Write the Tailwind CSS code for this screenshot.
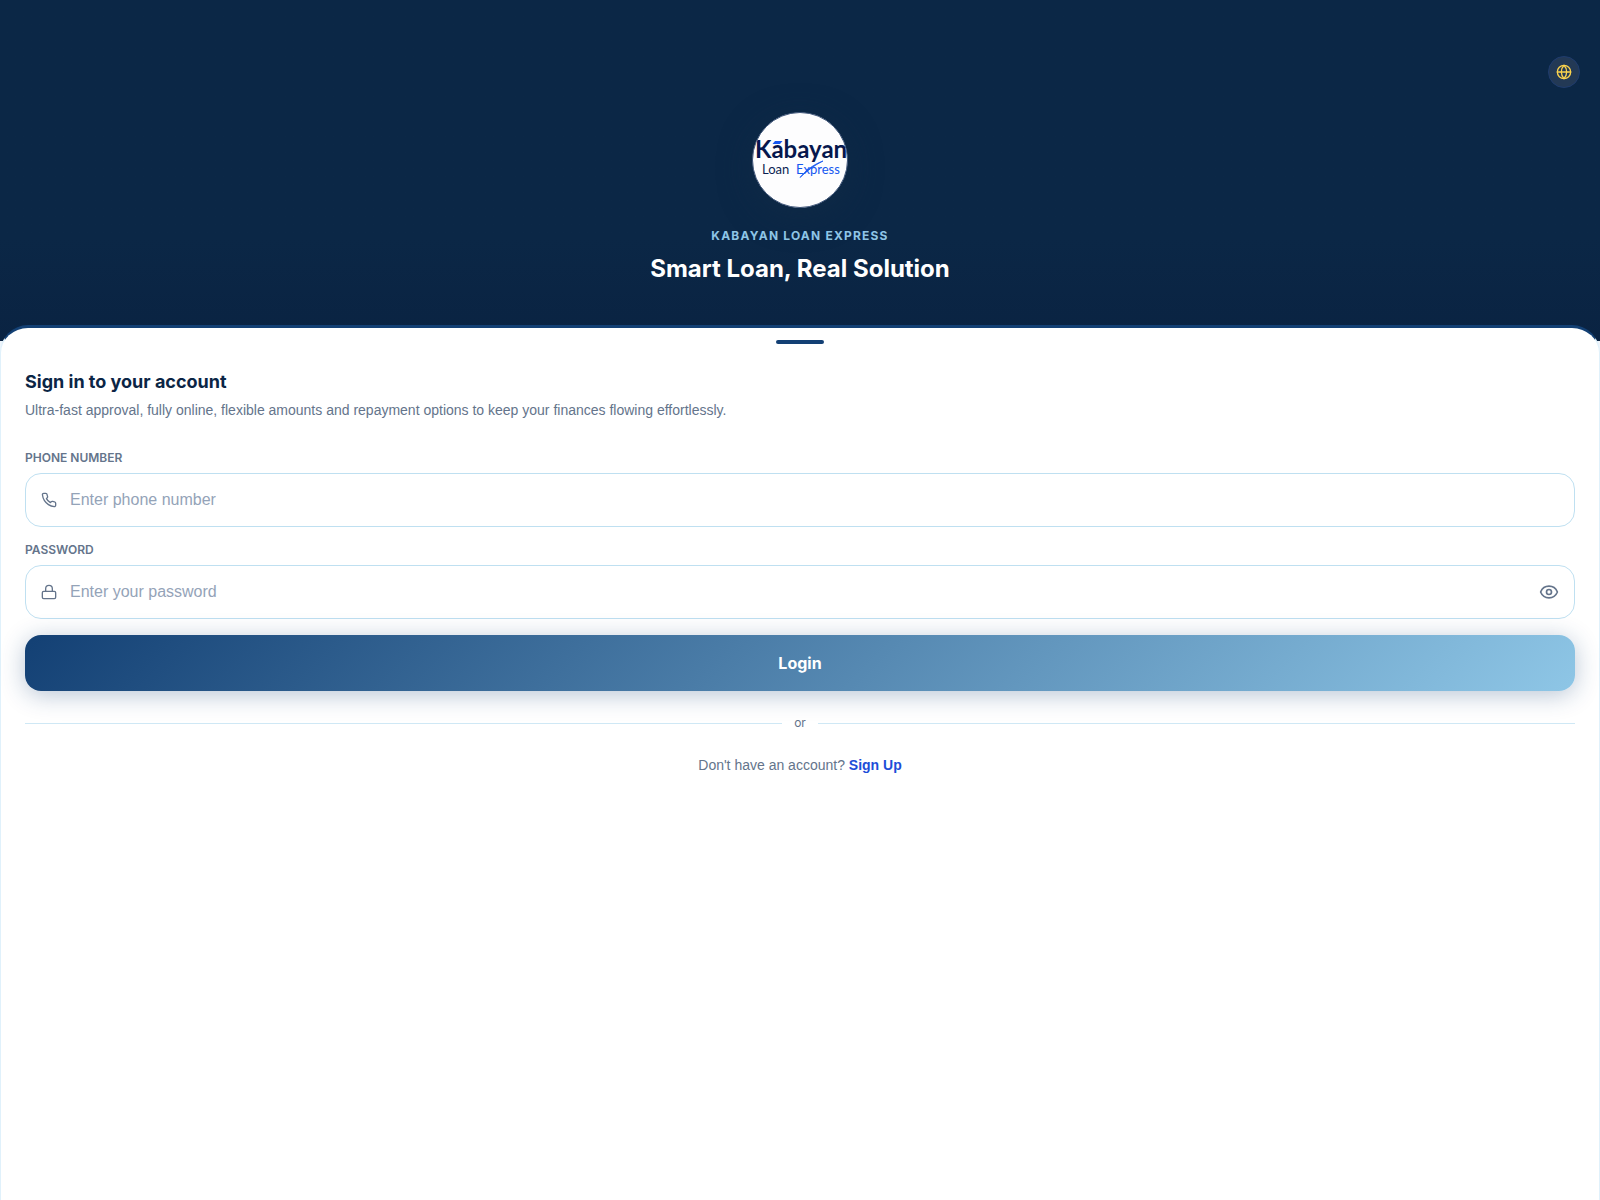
<!DOCTYPE html>
<html lang="en">
<head>
<meta charset="utf-8">
<meta name="viewport" content="width=device-width, initial-scale=1">
<title>Kabayan Loan Express</title>
<script src="https://cdn.jsdelivr.net/npm/@tailwindcss/browser@4"></script>
</head>
<body class="flex min-h-screen flex-col bg-[#eef4fa] font-[Inter,sans-serif]">
<header class="flex flex-col bg-linear-to-b from-[#0b2746] from-70% to-[#0a2342] px-5 pt-14 pb-14">
  <div class="flex justify-end">
    <button type="button" aria-label="Change language" class="flex size-8 items-center justify-center rounded-full border border-[#1f3c6e] bg-[#233955] text-[#fcd34d]">
      <svg class="size-4" viewBox="0 0 24 24" fill="none" stroke="currentColor" stroke-width="2" stroke-linecap="round" stroke-linejoin="round"><circle cx="12" cy="12" r="10"/><path d="M12 2a14.5 14.5 0 0 0 0 20 14.5 14.5 0 0 0 0-20"/><path d="M2 12h20"/></svg>
    </button>
  </div>
  <div class="mt-6 flex flex-col items-center">
    <svg class="size-24 rounded-full border border-[#40567a] bg-[#fdfdfe] shadow-[0_8px_32px_rgba(15,42,70,0.9)]" viewBox="1 1 94 94" role="img" aria-label="Kabayan Loan Express">
      <text x="3" y="46" font-family="Lato, sans-serif" font-weight="700" font-size="24" fill="#06174d">Kabayan</text>
      <path d="M20.500 32l2.500-3h7.500l-2.500 3z" fill="#1557f0"/>
      <text x="10" y="62" font-family="Lato, sans-serif" font-size="13" fill="#0b1f52">Loan</text>
      <text x="44" y="62" font-family="Lato, sans-serif" font-size="13" fill="#1557f0">Express</text>
      <path d="M48 65.500c5-6 12-12.500 23-16.500-9 4.500-16 10-23 16.500z" fill="#1557f0" stroke="#1557f0" stroke-width=".8"/>
    </svg>
    <p class="mt-[19px] text-xs leading-[18px] font-bold tracking-widest text-[#8ec5e6]">KABAYAN LOAN EXPRESS</p>
    <h1 class="mt-2 text-2xl leading-8 font-bold text-white">Smart Loan, Real Solution</h1>
  </div>
</header>
<main class="-mt-4 flex grow flex-col rounded-t-[28px] border-x border-t-3 border-x-[#e0f1fb] border-t-[#134074] bg-white px-6 pt-3 pb-8">
  <div class="h-1 w-12 self-center rounded-full bg-[#134074]"></div>
  <h2 class="mt-6 text-lg leading-7 font-bold text-[#0b2545]">Sign in to your account</h2>
  <p class="mt-1 font-[Liberation_Sans,sans-serif] text-sm leading-[21px] text-[#64748b]">Ultra-fast approval, fully online, flexible amounts and repayment options to keep your finances flowing effortlessly.</p>
  <form class="mt-7 flex flex-col gap-[14px]">
    <div class="flex flex-col gap-1.5">
      <label for="phone" class="text-xs leading-[18px] font-semibold text-[#64748b]">PHONE NUMBER</label>
      <div class="flex h-[54px] items-center gap-[13px] rounded-2xl border border-[#bfe0f1] px-[15px] text-[#64748b]">
        <svg class="size-4 shrink-0" viewBox="0 0 24 24" fill="none" stroke="currentColor" stroke-width="2" stroke-linecap="round" stroke-linejoin="round"><path d="M22 16.920v3a2 2 0 0 1-2.180 2 19.790 19.790 0 0 1-8.630-3.070 19.500 19.500 0 0 1-6-6 19.790 19.790 0 0 1-3.070-8.670A2 2 0 0 1 4.110 2h3a2 2 0 0 1 2 1.720 12.840 12.840 0 0 0 .7 2.810 2 2 0 0 1-.45 2.110L8.090 9.910a16 16 0 0 0 6 6l1.270-1.270a2 2 0 0 1 2.110-.45 12.840 12.840 0 0 0 2.810.7A2 2 0 0 1 22 16.920z"/></svg>
        <input id="phone" type="tel" placeholder="Enter phone number" class="min-w-0 grow bg-transparent font-[Liberation_Sans,sans-serif] text-base text-[#0b2545] outline-none placeholder:text-[#94a3b8]">
      </div>
    </div>
    <div class="flex flex-col gap-1.5">
      <label for="password" class="text-xs leading-[18px] font-semibold text-[#64748b]">PASSWORD</label>
      <div class="flex h-[54px] items-center gap-[13px] rounded-2xl border border-[#bfe0f1] px-[15px] text-[#64748b]">
        <svg class="size-4 shrink-0" viewBox="0 0 24 24" fill="none" stroke="currentColor" stroke-width="2" stroke-linecap="round" stroke-linejoin="round"><rect x="2" y="11" width="20" height="11" rx="2"/><path d="M7 11V7a5 5 0 0 1 10 0v4"/></svg>
        <input id="password" type="password" placeholder="Enter your password" class="min-w-0 grow bg-transparent font-[Liberation_Sans,sans-serif] text-base text-[#0b2545] outline-none placeholder:text-[#94a3b8]">
        <button type="button" aria-label="Show password"><svg class="size-5" viewBox="0 0 24 24" fill="none" stroke="currentColor" stroke-width="2" stroke-linecap="round" stroke-linejoin="round"><path d="M2.060 12.350a1 1 0 0 1 0-.7 10.750 10.750 0 0 1 19.880 0 1 1 0 0 1 0 .7 10.750 10.750 0 0 1-19.880 0"/><circle cx="12" cy="12" r="3"/></svg></button>
      </div>
    </div>
    <button type="submit" class="mt-0.5 h-14 rounded-2xl bg-[linear-gradient(135deg,#134074,#8ec6e6)] text-base font-bold text-white shadow-[0_4px_24px_rgba(19,64,116,0.3)]">Login</button>
  </form>
  <div class="mt-6 flex items-center gap-3">
    <div class="h-px grow bg-[#cfe8f5]"></div>
    <span class="text-xs leading-4 text-[#64748b]">or</span>
    <div class="h-px grow bg-[#cfe8f5]"></div>
  </div>
  <p class="mt-6 text-center font-[Liberation_Sans,sans-serif] text-sm leading-5 text-[#64748b]">Don't have an account? <a href="#" class="font-bold text-[#1d4ed8]">Sign Up</a></p>
</main>
</body>
</html>
